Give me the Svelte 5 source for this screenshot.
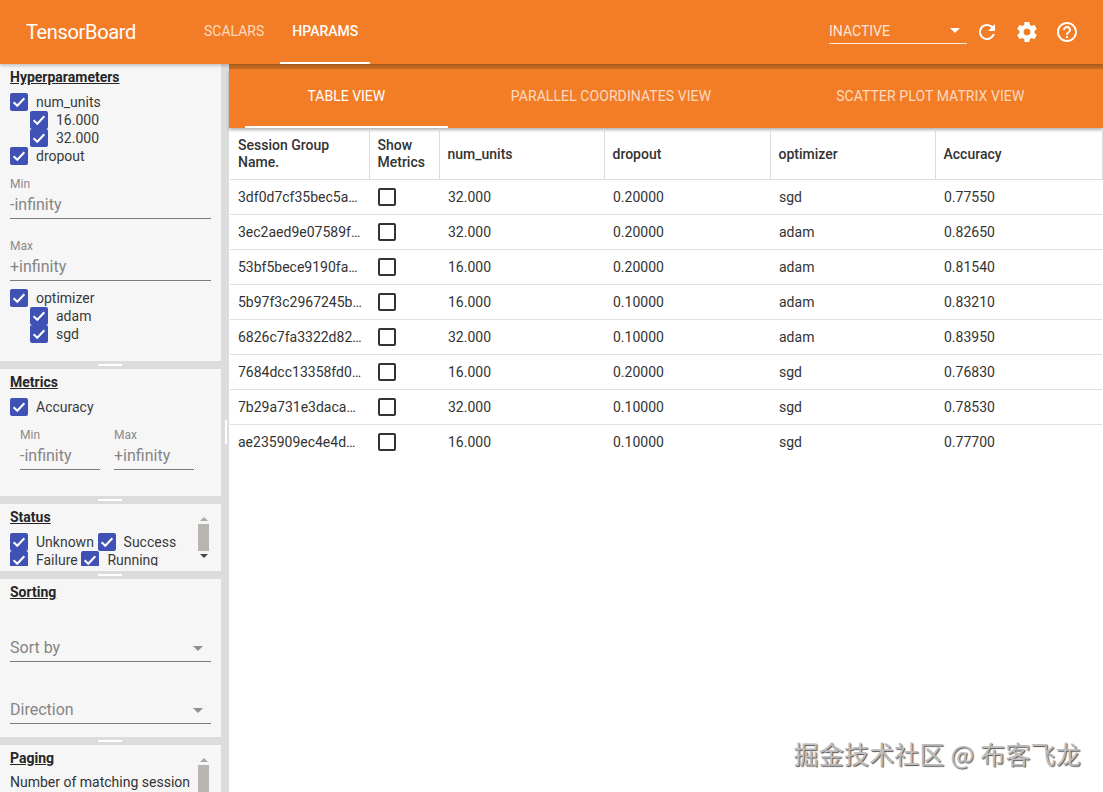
<script>
  const rows = [
    ['3df0d7cf35bec5a8e1c4', '32.000', '0.20000', 'sgd', '0.77550'],
    ['3ec2aed9e07589f3b1d2', '32.000', '0.20000', 'adam', '0.82650'],
    ['53bf5bece9190fa7c2e1', '16.000', '0.20000', 'adam', '0.81540'],
    ['5b97f3c2967245b0d4a8', '16.000', '0.10000', 'adam', '0.83210'],
    ['6826c7fa3322d82e91b6', '32.000', '0.10000', 'adam', '0.83950'],
    ['7684dcc13358fd0a7e35', '16.000', '0.20000', 'sgd', '0.76830'],
    ['7b29a731e3daca41f06c', '32.000', '0.10000', 'sgd', '0.78530'],
    ['ae235909ec4e4d7b8c12', '16.000', '0.10000', 'sgd', '0.77700']
  ];
  const heads = ['num_units', 'dropout', 'optimizer', 'Accuracy'];
</script>

{#snippet check(label, cls = '')}
  <div class="check {cls}">
    <span class="box"><svg viewBox="0 0 18 18" width="18" height="18"><path d="M3.6 9.2l3.7 3.6 7-7.6" fill="none" stroke="#fff" stroke-width="2"/></svg></span>
    <span>{label}</span>
  </div>
{/snippet}

{#snippet arrows(thumb)}
  <div class="scrollbar {thumb}">
    <i class="up"></i><b></b><i class="down"></i>
  </div>
{/snippet}

<div class="page">
  <header>
    <div class="brand">TensorBoard</div>
    <nav>
      <a>SCALARS</a>
      <a class="on">HPARAMS</a>
    </nav>
    <div class="spacer"></div>
    <div class="run"><span>INACTIVE</span><i></i></div>
    <div class="icons">
      <svg viewBox="0 0 24 24" width="24" height="24"><path d="M17.65 6.35C16.2 4.9 14.21 4 12 4c-4.42 0-7.99 3.58-7.99 8s3.57 8 7.99 8c3.73 0 6.84-2.55 7.73-6h-2.08c-.82 2.33-3.04 4-5.65 4-3.31 0-6-2.69-6-6s2.69-6 6-6c1.66 0 3.14.69 4.22 1.78L13 11h7V4l-2.35 2.35z"/></svg>
      <svg viewBox="0 0 24 24" width="24" height="24"><path d="M19.43 12.98c.04-.32.07-.64.07-.98s-.03-.66-.07-.98l2.11-1.65c.19-.15.24-.42.12-.64l-2-3.46c-.12-.22-.39-.3-.61-.22l-2.49 1c-.52-.4-1.08-.73-1.69-.98l-.38-2.65C14.46 2.18 14.25 2 14 2h-4c-.25 0-.46.18-.49.42l-.38 2.65c-.61.25-1.17.59-1.69.98l-2.49-1c-.23-.09-.49 0-.61.22l-2 3.46c-.13.22-.07.49.12.64l2.11 1.65c-.04.32-.07.65-.07.98s.03.66.07.98l-2.11 1.65c-.19.15-.24.42-.12.64l2 3.46c.12.22.39.3.61.22l2.49-1c.52.4 1.08.73 1.69.98l.38 2.65c.03.24.24.42.49.42h4c.25 0 .46-.18.49-.42l.38-2.65c.61-.25 1.17-.59 1.69-.98l2.49 1c.23.09.49 0 .61-.22l2-3.46c.12-.22.07-.49-.12-.64l-2.11-1.65zM12 15.5c-1.93 0-3.5-1.57-3.5-3.5s1.57-3.5 3.5-3.5 3.5 1.57 3.5 3.5-1.57 3.5-3.5 3.5z"/></svg>
      <svg viewBox="0 0 24 24" width="24" height="24"><path d="M11 18h2v-2h-2v2zm1-16C6.48 2 2 6.48 2 12s4.48 10 10 10 10-4.48 10-10S17.52 2 12 2zm0 18c-4.41 0-8-3.59-8-8s3.59-8 8-8 8 3.59 8 8-3.59 8-8 8zm0-14c-2.21 0-4 1.79-4 4h2c0-1.1.9-2 2-2s2 .9 2 2c0 2-3 1.75-3 5h2c0-2.25 3-2.5 3-5 0-2.21-1.79-4-4-4z"/></svg>
    </div>
  </header>

  <div class="body">
    <aside>
      <section class="hyper">
        <h3>Hyperparameters</h3>
        {@render check('num_units')}
        {@render check('16.000', 'sub')}
        {@render check('32.000', 'sub')}
        {@render check('dropout')}
        <div class="field first"><label>Min</label><div class="value">-infinity</div></div>
        <div class="field second"><label>Max</label><div class="value">+infinity</div></div>
        <div class="opt">{@render check('optimizer')}</div>
        {@render check('adam', 'sub')}
        {@render check('sgd', 'sub')}
        <em class="handle"></em>
      </section>

      <section class="metrics">
        <h3>Metrics</h3>
        {@render check('Accuracy')}
        <div class="range">
          <div class="field"><label>Min</label><div class="value">-infinity</div></div>
          <div class="field"><label>Max</label><div class="value">+infinity</div></div>
        </div>
        <em class="handle"></em>
      </section>

      <section class="status">
        <h3>Status</h3>
        <div class="wrap">
          {@render check('Unknown')}
          {@render check('Success')}
          {@render check('Failure')}
          {@render check('Running')}
        </div>
        {@render arrows('short')}
        <em class="handle"></em>
      </section>

      <section class="sorting">
        <h3>Sorting</h3>
        <div class="select"><span>Sort by</span><i></i></div>
        <div class="select"><span>Direction</span><i></i></div>
        <em class="handle"></em>
      </section>

      <section class="paging">
        <h3>Paging</h3>
        <p>Number of matching session</p>
        {@render arrows('long')}
      </section>
      <em class="vhandle"></em>
    </aside>

    <main>
      <div class="strip"></div>
      <div class="tabs">
        <div class="tab on">TABLE VIEW</div>
        <div class="tab">PARALLEL COORDINATES VIEW</div>
        <div class="tab">SCATTER PLOT MATRIX VIEW</div>
      </div>
      <table>
        <colgroup>
          <col class="c1" /><col class="c2" /><col class="c3" /><col class="c4" /><col class="c3" /><col class="c5" />
        </colgroup>
        <thead>
          <tr>
            <th>Session Group Name.</th>
            <th>Show Metrics</th>
            {#each heads as h}<th>{h}</th>{/each}
          </tr>
        </thead>
        <tbody>
          {#each rows as r}
            <tr>
              <td><div class="hash">{r[0]}</div></td>
              <td><span class="empty"></span></td>
              <td>{r[1]}</td>
              <td>{r[2]}</td>
              <td>{r[3]}</td>
              <td>{r[4]}</td>
            </tr>
          {/each}
        </tbody>
      </table>
    </main>
  </div>
  <div class="mark">掘金技术社区 @ 布客飞龙</div>
</div>

<style>
  :global(body) { margin: 0; }
  .page {
    position: relative;
    width: 1103px;
    height: 792px;
    overflow: hidden;
    font-family: Roboto, "Liberation Sans", sans-serif;
    font-size: 14px;
    color: #2b2b2b;
    background: #fff;
  }
  header {
    position: relative;
    z-index: 3;
    height: 64px;
    background: #f37d26;
    display: flex;
    align-items: stretch;
    color: #fff;
    box-shadow: 0 2px 3px rgba(0, 0, 0, 0.2);
  }
  .brand { font-size: 20px; letter-spacing: -0.35px; line-height: 64px; margin-left: 26px; width: 154px; }
  nav { display: flex; margin-left: 12px; }
  nav a {
    padding: 0 12px;
    line-height: 62px;
    color: rgba(255, 255, 255, 0.72);
    border-bottom: 2px solid transparent;
    height: 62px;
    margin-right: 4px;
  }
  nav a.on { color: #fff; font-weight: 500; border-bottom-color: #fff; margin: 0; }
  .spacer { flex: 1; }
  .run {
    width: 138px;
    height: 44px;
    box-sizing: border-box;
    border-bottom: 1px solid rgba(255, 255, 255, 0.85);
    display: flex;
    align-items: center;
    justify-content: space-between;
    padding: 18px 7px 0 0;
    color: rgba(255, 255, 255, 0.82);
  }
  .run i { border: 5px solid transparent; border-top-color: #fff; border-bottom: 0; }
  .icons { display: flex; gap: 16px; margin: 20px 24px 0 8px; }
  .icons svg { fill: #fff; }

  .body { display: flex; height: 728px; }
  aside {
    position: relative;
    width: 229px;
    flex: none;
    box-sizing: border-box;
    padding-right: 8px;
    background: #dcdcdc;
    display: grid;
    grid-template-rows: 297px 127px 67px 158px 47px;
    gap: 8px;
  }
  section {
    position: relative;
    box-sizing: border-box;
    padding: 5px 10px 0;
    background: conic-gradient(#f0f0f0 25%, #fcfcfc 0 50%, #f0f0f0 0 75%, #fcfcfc 0) 0 0 / 2px 2px;
  }
  h3 {
    margin: 0 0 8px;
    font-size: 14px;
    line-height: 16px;
    font-weight: 700;
    text-decoration: underline;
    color: #262626;
  }
  .check { display: flex; height: 18px; line-height: 18px; align-items: center; color: #3a3a3a; }
  .check.sub { margin-left: 20px; }
  .box {
    width: 18px;
    height: 18px;
    flex: none;
    margin-right: 8px;
    border-radius: 2px;
    background: #3f51b5;
    display: block;
  }
  .box svg { display: block; }
  .field label { display: block; font-size: 12px; line-height: 16px; color: #8a8a8a; }
  .value {
    font-size: 16px;
    line-height: 24px;
    padding: 1px 0 1px;
    color: #858585;
    border-bottom: 1px solid #7c7c7c;
  }
  .field.first { margin-top: 11px; }
  .field.second { margin-top: 19px; }
  .opt { margin-top: 8px; }
  .range { display: flex; gap: 14px; margin: 11px 0 0 10px; }
  .range .field { width: 80px; }
  .wrap { display: flex; flex-wrap: wrap; width: 180px; height: 33px; overflow: hidden; align-content: flex-start; }
  .wrap :global(.check) { margin-right: 3.7px; }
  .select {
    margin-top: 35px;
    height: 26px;
    box-sizing: content-box;
    border-bottom: 1px solid #7c7c7c;
    display: flex;
    justify-content: space-between;
    font-size: 16px;
    line-height: 26px;
    color: #858585;
  }
  .select i { border: 5px solid transparent; border-top-color: #8f8f8f; border-bottom: 0; margin: 11px 8px 0 0; }
  p { margin: 0; line-height: 16px; color: #333; white-space: nowrap; }

  .handle { position: absolute; left: 98px; bottom: -5px; width: 24px; height: 2px; background: #fff; }
  .vhandle { position: absolute; left: 225px; top: 356px; width: 2px; height: 24px; background: #fff; }

  .scrollbar { position: absolute; right: 12px; top: 13px; width: 11px; display: flex; flex-direction: column; align-items: center; }
  .scrollbar b { display: block; width: 11px; background: #b9b6b1; margin: 3px 0; }
  .scrollbar.short b { height: 27px; }
  .scrollbar.long b { height: 40px; }
  .scrollbar i { display: block; border: 4px solid transparent; }
  .scrollbar .up { border-bottom: 4px solid #aaa; border-top: 0; }
  .scrollbar .down { border-top: 4px solid #444; border-bottom: 0; }

  main { flex: 1; min-width: 0; position: relative; }
  .strip { height: 5px; background: #c96c22; }
  .tabs {
    position: relative;
    z-index: 1;
    height: 59px;
    background: #f37d26;
    display: flex;
    padding-left: 16px;
    box-shadow: 0 2px 3px rgba(0, 0, 0, 0.3);
  }
  .tab {
    padding: 0 62px 0 63px;
    line-height: 55px;
    letter-spacing: 0.08px;
    color: rgba(255, 255, 255, 0.72);
    white-space: nowrap;
  }
  .tab.on { padding: 0 62.5px; color: #fff; letter-spacing: 0; border-bottom: 2px solid #fff; height: 57px; box-sizing: content-box; }
  table {
    margin: 3px 0 0 1px;
    width: 872px;
    table-layout: fixed;
    border-collapse: collapse;
    color: #333;
  }
  .c1 { width: 139px; }
  .c2 { width: 70px; }
  .c3 { width: 165px; }
  .c4 { width: 166px; }
  .c5 { width: 167px; }
  th {
    height: 48px;
    box-sizing: border-box;
    padding: 0 8px 1px 8px;
    text-align: left;
    font-weight: 500;
    line-height: 17px;
    border-right: 1px solid #ddd;
    border-bottom: 1px solid #ddd;
    color: #333;
  }
  td {
    height: 35px;
    box-sizing: border-box;
    padding: 0 8px 0 9px;
    border-bottom: 1px solid #e0e0e0;
  }
  tr > :first-child { padding-left: 8px; }
  tbody tr:last-child td { border-bottom: 0; }
  .hash { white-space: nowrap; overflow: hidden; text-overflow: ellipsis; width: 124px; }
  .empty { display: block; width: 18px; height: 18px; box-sizing: border-box; border: 2px solid #333; border-radius: 2px; }
  .mark {
    position: absolute;
    right: 22px;
    top: 738px;
    font-family: "Noto Sans CJK SC", sans-serif;
    font-size: 25px;
    letter-spacing: 0.2px;
    line-height: 30px;
    color: #bdbdbd;
    text-shadow: 1px 1px 1px #555;
    white-space: nowrap;
  }
</style>
